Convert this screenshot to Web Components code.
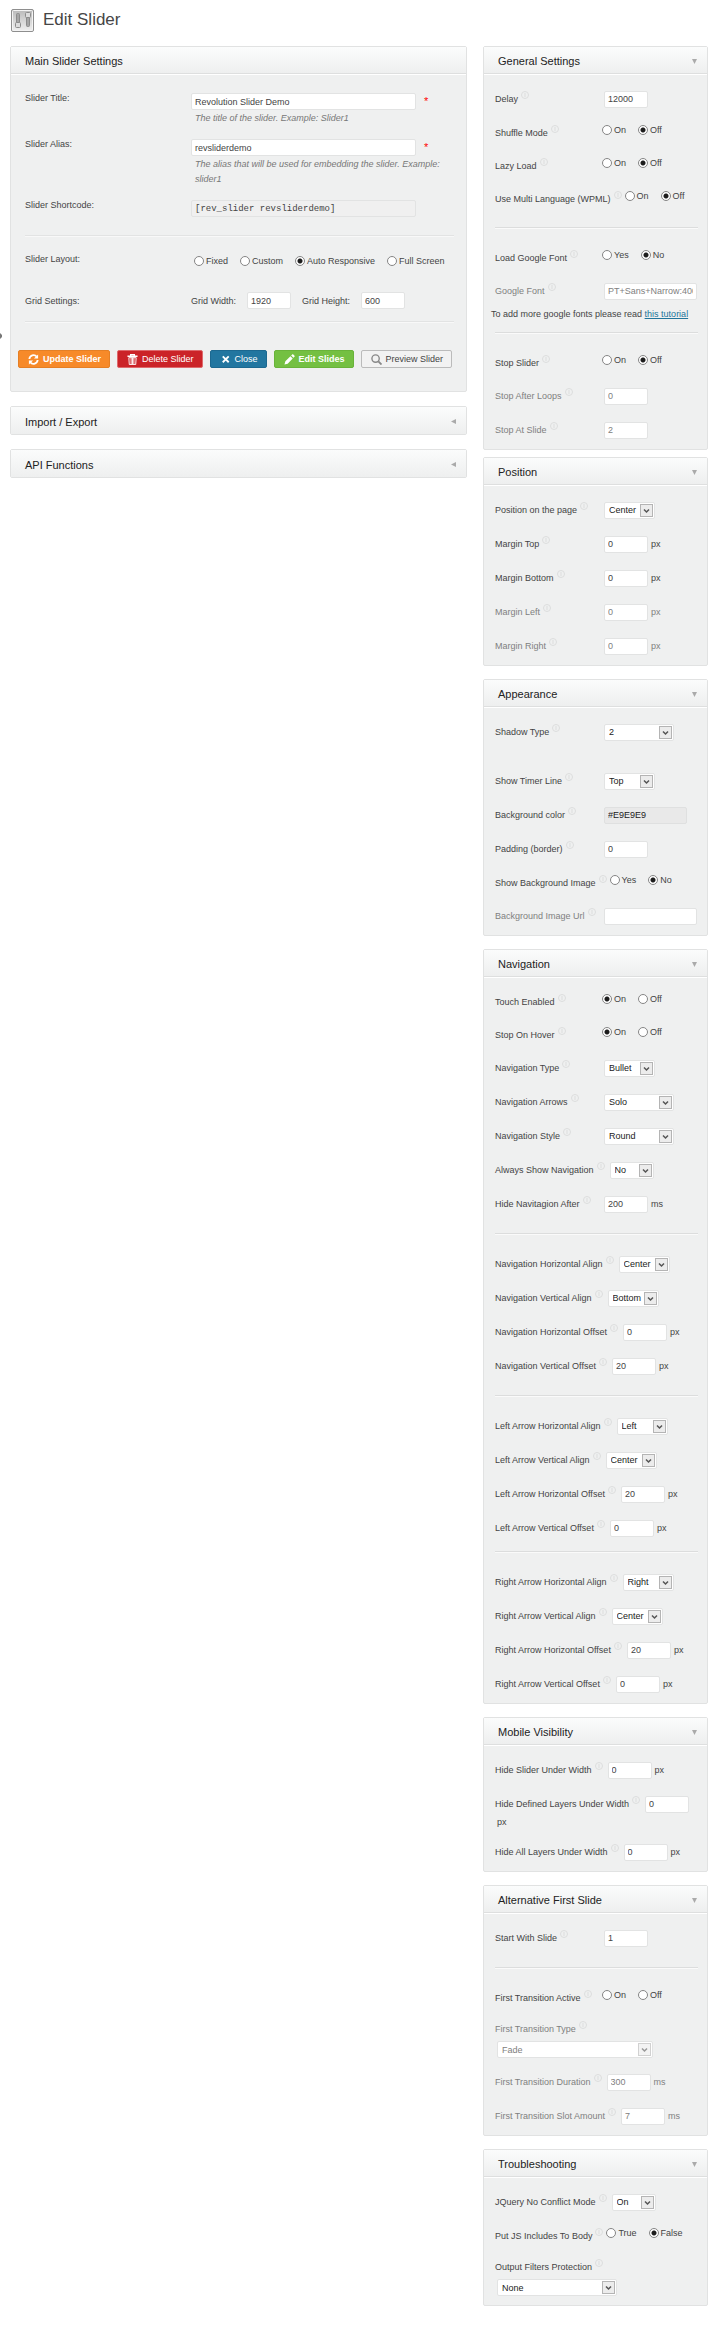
<!DOCTYPE html>
<html lang="en">
<head>
<meta charset="utf-8">
<title>Edit Slider</title>
<style>
  body {
    margin: 0;
    background: #fff;
    color: #444;
    font-family: "Liberation Sans", Arial, sans-serif;
    font-size: 9px;
    line-height: 14px;
  }
</style>
</head>
<body>
<slider-page>
  <settings-panel slot="main" heading="Main Slider Settings" fixed>
    <slider-form></slider-form>
  </settings-panel>
  <settings-panel slot="main" heading="Import / Export" closed></settings-panel>
  <settings-panel slot="main" heading="API Functions" closed></settings-panel>

  <panel-group slot="side">
    <settings-panel heading="General Settings">
      <setting-row label="Delay" value="12000"></setting-row>
      <setting-row label="Shuffle Mode" type="radio" options="On,Off" value="Off"></setting-row>
      <setting-row label="Lazy Load" type="radio" options="On,Off" value="Off"></setting-row>
      <setting-row label="Use Multi Language (WPML)" type="radio" options="On,Off" value="Off"></setting-row>
      <setting-divider></setting-divider>
      <setting-row label="Load Google Font" type="radio" options="Yes,No" value="No"></setting-row>
      <setting-row label="Google Font" value="PT+Sans+Narrow:400,700" size="wide" muted></setting-row>
      <setting-note>To add more google fonts please read <a href="#tutorial">this tutorial</a></setting-note>
      <setting-divider></setting-divider>
      <setting-row label="Stop Slider" type="radio" options="On,Off" value="Off"></setting-row>
      <setting-row label="Stop After Loops" value="0" muted></setting-row>
      <setting-row label="Stop At Slide" value="2" muted></setting-row>
    </settings-panel>
    <settings-panel heading="Position">
      <setting-row label="Position on the page" type="select" value="Center"></setting-row>
      <setting-row label="Margin Top" value="0" unit="px"></setting-row>
      <setting-row label="Margin Bottom" value="0" unit="px"></setting-row>
      <setting-row label="Margin Left" value="0" unit="px" muted></setting-row>
      <setting-row label="Margin Right" value="0" unit="px" muted></setting-row>
    </settings-panel>
  </panel-group>

  <settings-panel slot="side" heading="Appearance">
    <setting-row label="Shadow Type" type="select" value="2" size="medium"></setting-row>
    <setting-divider blank></setting-divider>
    <setting-row label="Show Timer Line" type="select" value="Top"></setting-row>
    <setting-row label="Background color" value="#E9E9E9" size="color"></setting-row>
    <setting-row label="Padding (border)" value="0"></setting-row>
    <setting-row label="Show Background Image" type="radio" options="Yes,No" value="No"></setting-row>
    <setting-row label="Background Image Url" value="" size="wide" muted></setting-row>
  </settings-panel>

  <settings-panel slot="side" heading="Navigation">
    <setting-row label="Touch Enabled" type="radio" options="On,Off" value="On"></setting-row>
    <setting-row label="Stop On Hover" type="radio" options="On,Off" value="On"></setting-row>
    <setting-row label="Navigation Type" type="select" value="Bullet"></setting-row>
    <setting-row label="Navigation Arrows" type="select" value="Solo" size="medium"></setting-row>
    <setting-row label="Navigation Style" type="select" value="Round" size="medium"></setting-row>
    <setting-row label="Always Show Navigation" type="select" value="No" size="small"></setting-row>
    <setting-row label="Hide Navitagion After" value="200" unit="ms"></setting-row>
    <setting-divider></setting-divider>
    <setting-row label="Navigation Horizontal Align" type="select" value="Center"></setting-row>
    <setting-row label="Navigation Vertical Align" type="select" value="Bottom"></setting-row>
    <setting-row label="Navigation Horizontal Offset" value="0" unit="px"></setting-row>
    <setting-row label="Navigation Vertical Offset" value="20" unit="px"></setting-row>
    <setting-divider></setting-divider>
    <setting-row label="Left Arrow Horizontal Align" type="select" value="Left"></setting-row>
    <setting-row label="Left Arrow Vertical Align" type="select" value="Center"></setting-row>
    <setting-row label="Left Arrow Horizontal Offset" value="20" unit="px"></setting-row>
    <setting-row label="Left Arrow Vertical Offset" value="0" unit="px"></setting-row>
    <setting-divider compact></setting-divider>
    <setting-row label="Right Arrow Horizontal Align" type="select" value="Right"></setting-row>
    <setting-row label="Right Arrow Vertical Align" type="select" value="Center"></setting-row>
    <setting-row label="Right Arrow Horizontal Offset" value="20" unit="px"></setting-row>
    <setting-row label="Right Arrow Vertical Offset" value="0" unit="px"></setting-row>
  </settings-panel>

  <settings-panel slot="side" heading="Mobile Visibility">
    <setting-row label="Hide Slider Under Width" value="0" unit="px"></setting-row>
    <setting-row label="Hide Defined Layers Under Width" value="0" unit="px" unit-below></setting-row>
    <setting-row label="Hide All Layers Under Width" value="0" unit="px"></setting-row>
  </settings-panel>

  <settings-panel slot="side" heading="Alternative First Slide">
    <setting-row label="Start With Slide" value="1"></setting-row>
    <setting-divider></setting-divider>
    <setting-row label="First Transition Active" type="radio" options="On,Off" value=""></setting-row>
    <setting-row label="First Transition Type" type="select" value="Fade" size="full" stacked muted></setting-row>
    <setting-row label="First Transition Duration" value="300" unit="ms" muted></setting-row>
    <setting-row label="First Transition Slot Amount" value="7" unit="ms" muted></setting-row>
  </settings-panel>

  <settings-panel slot="side" heading="Troubleshooting">
    <setting-row label="JQuery No Conflict Mode" type="select" value="On" size="small"></setting-row>
    <setting-row label="Put JS Includes To Body" type="radio" options="True,False" value="False"></setting-row>
    <setting-row label="Output Filters Protection" type="select" value="None" size="large" stacked></setting-row>
  </settings-panel>
</slider-page>

<script>
// Form control look, shared by every element that draws a field
const controlStyles = /* css */ `
  * {
    box-sizing: border-box;
  }

  input,
  select,
  button {
    font: inherit;
    color: inherit;
    margin: 0;
  }

  input[type="text"],
  select {
    height: 17px;
    padding: 0 3px;
    border: 1px solid #e2e3e3;
    border-radius: 2px;
    background: #fff;
    outline: none;
  }

  input[type="radio"] {
    appearance: none;
    flex: none;
    width: 10px;
    height: 10px;
    border: 1px solid #858585;
    border-radius: 50%;
    background: #fff;
  }

  input[type="radio"]:checked {
    background: radial-gradient(circle, #1c1c1c 0 2px, #fff 3px);
  }

  .radios {
    display: flex;
    align-items: center;
    gap: 12px;
  }

  .radios label {
    display: flex;
    align-items: center;
    gap: 2px;
    white-space: nowrap;
  }
`

class SliderPage extends HTMLElement {
  constructor() {
    super()
    this.attachShadow({ mode: "open" }).innerHTML = /* html */ `
      <style>
        :host {
          display: block;
          position: relative;
          padding: 0 15px 24px 10px;
        }

        header {
          display: flex;
          align-items: center;
          gap: 8px;
          height: 46px;
          padding-bottom: 6px;
          box-sizing: border-box;
        }

        header svg {
          width: 25px;
          height: 25px;
        }

        h1 {
          margin: 0;
          color: #464646;
          font-size: 17px;
          font-weight: 400;
          line-height: 24px;
        }

        .columns {
          display: grid;
          grid-template-columns: 1fr 225px;
          gap: 16px;
          align-items: start;
        }

        .main,
        aside {
          display: flex;
          flex-direction: column;
          gap: 14px;
        }

        aside {
          gap: 13px;
        }

        /* handle of the collapsed admin menu, sits on the window edge */
        .handle {
          position: absolute;
          left: 0;
          top: 333px;
          width: 2px;
          height: 6px;
        }
      </style>
      <svg class="handle" viewBox="0 0 2 6"><path d="M0 0L2 2V4L0 6Z" fill="#777"/></svg>
      <header>
        <svg viewBox="0 0 25 25" aria-hidden="true">
          <defs>
            <linearGradient id="tile" x1="0" y1="0" x2="0" y2="1">
              <stop offset="0" stop-color="#b9b9b9"/>
              <stop offset="1" stop-color="#f1f1f1"/>
            </linearGradient>
          </defs>
          <rect x="1.5" y="1.5" width="22" height="22" rx="1.5" fill="url(#tile)" stroke="#8e8e8e"/>
          <rect x="2.5" y="2.5" width="20" height="20" rx="1" fill="none" stroke="#f4f4f4"/>
          <rect x="6.5" y="5.5" width="3" height="11" rx="1" fill="#a6a6a6" stroke="#8c8c8c"/>
          <rect x="5.5" y="14.5" width="5" height="5" rx="1" fill="#dcdcdc" stroke="#8c8c8c"/>
          <rect x="16.5" y="8.5" width="3" height="10" rx="1" fill="#a6a6a6" stroke="#8c8c8c"/>
          <rect x="15.5" y="4.5" width="5" height="5" rx="1" fill="#dcdcdc" stroke="#8c8c8c"/>
        </svg>
        <h1>Edit Slider</h1>
      </header>
      <div class="columns">
        <div class="main"><slot name="main"></slot></div>
        <aside><slot name="side"></slot></aside>
      </div>
    `
  }
}

class PanelGroup extends HTMLElement {
  constructor() {
    super()
    this.attachShadow({ mode: "open" }).innerHTML = /* html */ `
      <style>
        :host {
          display: flex;
          flex-direction: column;
          gap: 7px;
        }
      </style>
      <slot></slot>
    `
  }
}

class SettingsPanel extends HTMLElement {
  connectedCallback() {
    const fixed = this.hasAttribute("fixed")
    const root = this.attachShadow({ mode: "open" })
    root.innerHTML = /* html */ `
      <style>
        :host {
          display: block;
          border: 1px solid #e1e2e2;
          border-radius: 2px;
          background: #eff0f0;
        }

        header {
          display: flex;
          align-items: center;
          justify-content: space-between;
          height: 27px;
          padding: 2px 10px 0 14px;
          box-sizing: border-box;
          border-bottom: 1px solid #dedfdf;
          background: linear-gradient(#fbfcfc, #eeefef);
        }

        h2 {
          margin: 0;
          color: #222;
          font-size: 11px;
          font-weight: 400;
          line-height: 16px;
        }

        button {
          display: flex;
          padding: 0;
          border: 0;
          background: none;
          cursor: pointer;
        }

        svg {
          width: 5px;
          height: 5px;
          fill: #aaa;
        }

        .body {
          padding: 7px 9px 2px 11px;
          border-top: 1px solid #fff;
        }

        :host([fixed]) .body {
          padding: 16px 12px 23px 7px;
        }

        :host([closed]) header {
          border-bottom: 0;
        }

        :host([closed]) .body {
          display: none;
        }

        :host([closed]) svg {
          transform: rotate(90deg);
        }
      </style>
      <header>
        <h2>${this.getAttribute("heading")}</h2>
        ${fixed ? "" : `<button type="button" aria-label="Toggle ${this.getAttribute("heading")}">
          <svg viewBox="0 0 6 6"><path d="M0 0H6L3 6Z"/></svg>
        </button>`}
      </header>
      <div class="body"><slot></slot></div>
    `
    if (!fixed) {
      root.querySelector("button").addEventListener("click", () => {
        this.toggleAttribute("closed")
      })
    }
  }
}

class SettingDivider extends HTMLElement {
  constructor() {
    super()
    this.attachShadow({ mode: "open" }).innerHTML = /* html */ `
      <style>
        :host {
          display: block;
          padding: 12px 0;
        }

        :host([compact]) {
          padding-top: 6px;
        }

        :host([blank]) {
          height: 15px;
          padding: 0;
        }

        :host([blank]) hr {
          display: none;
        }

        hr {
          margin: 0;
          border: 0;
          border-top: 1px solid #dcdddd;
          border-bottom: 1px solid #fafafa;
        }
      </style>
      <hr>
    `
  }
}

class SettingNote extends HTMLElement {
  constructor() {
    super()
    this.attachShadow({ mode: "open" }).innerHTML = /* html */ `
      <style>
        :host {
          display: block;
          margin: 0 -4px;
          line-height: 12px;
        }

        ::slotted(a) {
          color: #21759b;
        }
      </style>
      <slot></slot>
    `
  }
}

class SettingRow extends HTMLElement {
  connectedCallback() {
    this.type = this.getAttribute("type") || "text"
    this.value = this.getAttribute("value")
    this.attachShadow({ mode: "open" }).innerHTML = this.template()
  }

  control() {
    if (this.type === "radio") {
      const options = this.getAttribute("options").split(",")
      return `<div class="radios" role="radiogroup" aria-labelledby="name">
        ${options.map((o) => `<label><input type="radio" name="choice" ${o === this.value ? "checked" : ""}>${o}</label>`).join("")}
      </div>`
    }
    if (this.type === "select") {
      return `<span class="select">
        <select id="field"><option>${this.value}</option></select>
        <svg viewBox="0 0 13 13"><rect x="0.5" y="0.5" width="12" height="12"/><path d="M4 5.5L6.5 8L9 5.5"/></svg>
      </span>`
    }
    return `<input type="text" id="field" value="${this.value}">`
  }

  template() {
    const unit = this.getAttribute("unit")
    const tag = this.type === "radio" ? "span" : "label"
    return /* html */ `
      <style>
        ${controlStyles}

        :host {
          display: flex;
          flex-wrap: wrap;
          align-items: center;
        }

        .name {
          display: flex;
          align-items: center;
          gap: 3px;
          min-width: 107px;
          height: 34px;
          padding-right: 3px;
          white-space: nowrap;
        }

        .info {
          width: 8px;
          height: 8px;
          margin-bottom: 8px;
          fill: none;
          stroke: #dcdddd;
        }

        #field {
          width: 44px;
        }

        input[type="text"],
        .select {
          margin-left: 2px;
        }

        .select {
          position: relative;
          display: flex;
        }

        .select #field {
          appearance: none;
          width: 51px;
          padding: 0 0 0 4px;
          color: #222;
        }

        .select svg {
          position: absolute;
          right: 2px;
          top: 2px;
          width: 13px;
          height: 13px;
          fill: #ececec;
          stroke: #b4b4b4;
          pointer-events: none;
        }

        .select path {
          fill: none;
          stroke: #555;
          stroke-width: 1.5;
        }

        .unit {
          margin-left: 3px;
        }

        /* unit has no room beside the field and hangs under the label */
        :host([unit-below]) .unit {
          margin: -6px 0 6px 2px;
        }

        :host([type="radio"]) .name {
          height: 33px;
        }

        .radios {
          margin-bottom: 5px;
        }

        :host([size="small"]) #field { width: 44px; }
        :host([size="medium"]) #field { width: 70px; }
        :host([size="wide"]) #field { width: 93px; }
        :host([size="large"]) #field { width: 120px; }
        :host([size="full"]) #field { width: 156px; }

        :host([size="color"]) #field {
          width: 83px;
          background: #e9e9e9;
          border-color: #dfe0e0;
          color: #222;
        }

        :host([stacked]) {
          flex-direction: column;
          align-items: flex-start;
          padding: 3px 0 7px;
        }

        :host([stacked]) .name {
          height: 24px;
        }

        :host([muted]),
        :host([muted]) .select #field {
          color: #808080;
        }

        :host([muted]) .select svg {
          opacity: 0.6;
        }
      </style>
      <${tag} class="name" id="name" ${tag === "label" ? 'for="field"' : ""}>
        ${this.getAttribute("label")}
        <svg class="info" viewBox="0 0 8 8"><circle cx="4" cy="4" r="3.5"/><path d="M4 2V6"/></svg>
      </${tag}>
      ${this.control()}
      ${unit ? `<span class="unit">${unit}</span>` : ""}
    `
  }
}

class SliderForm extends HTMLElement {
  constructor() {
    super()
    this.attachShadow({ mode: "open" }).innerHTML = /* html */ `
      <style>
        ${controlStyles}

        :host {
          display: block;
        }

        .rows {
          display: grid;
          row-gap: 11px;
          padding-left: 7px;
        }

        .row {
          display: grid;
          grid-template-columns: 166px 1fr;
          align-items: start;
        }

        .field {
          padding-top: 2px;
        }

        .line {
          display: flex;
          align-items: center;
          gap: 8px;
        }

        .line input {
          width: 225px;
        }

        .required {
          color: #f00;
          font-size: 11px;
          line-height: 11px;
        }

        .line .code {
          background: #f0f0f0;
          font-family: "Liberation Mono", monospace;
        }

        p {
          margin: 1px 0 0;
          padding-left: 4px;
          color: #777;
          font-style: italic;
          line-height: 15px;
        }

        .layout {
          row-gap: 24px;
          padding-top: 15px;
        }

        .layout .radios {
          padding-left: 3px;
        }

        .grid {
          align-items: center;
        }

        .grid .line {
          gap: 11px;
        }

        .grid input {
          width: 44px;
        }

        hr {
          margin: 18px 0 0 7px;
          border: 0;
          border-top: 1px solid #e2e3e3;
          border-bottom: 1px solid #f8f8f8;
        }

        .layout + hr {
          margin-top: 12px;
        }

        .buttons {
          display: flex;
          flex-wrap: wrap;
          gap: 7px;
          margin: 27px -12px 0 0;
        }

        button {
          display: flex;
          align-items: center;
          gap: 4px;
          height: 18px;
          padding: 0 8px 0 9px;
          border: 1px solid;
          border-radius: 2px;
          color: #fff;
          white-space: nowrap;
          cursor: pointer;
        }

        button svg {
          width: 11px;
          height: 11px;
          fill: none;
          stroke: currentColor;
          stroke-width: 2;
        }

        .update { background: #f78a29; border-color: #e57f24; font-weight: 700; }
        .delete { background: #cb2328; border-color: #de6a6d; }
        .close { background: #2276a0; border-color: #1c6890; }
        .edit { background: #74c042; border-color: #69b33a; font-weight: 700; }
        .preview { background: #f2f2f2; border-color: #bbb; color: #444; }
        .preview svg { stroke: #888; }
      </style>
      <form>
        <div class="rows">
          <div class="row">
            <label for="title">Slider Title:</label>
            <div class="field">
              <div class="line"><input type="text" id="title" value="Revolution Slider Demo"><span class="required">*</span></div>
              <p>The title of the slider. Example: Slider1</p>
            </div>
          </div>
          <div class="row">
            <label for="alias">Slider Alias:</label>
            <div class="field">
              <div class="line"><input type="text" id="alias" value="revsliderdemo"><span class="required">*</span></div>
              <p>The alias that will be used for embedding the slider. Example: slider1</p>
            </div>
          </div>
          <div class="row">
            <label for="shortcode">Slider Shortcode:</label>
            <div class="field line"><input type="text" id="shortcode" class="code" value="[rev_slider revsliderdemo]" readonly></div>
          </div>
        </div>
        <hr>
        <div class="rows layout">
          <div class="row">
            <span id="layout">Slider Layout:</span>
            <div class="field radios" role="radiogroup" aria-labelledby="layout">
              <label><input type="radio" name="layout">Fixed</label>
              <label><input type="radio" name="layout">Custom</label>
              <label><input type="radio" name="layout" checked>Auto Responsive</label>
              <label><input type="radio" name="layout">Full Screen</label>
            </div>
          </div>
          <div class="row grid">
            <span>Grid Settings:</span>
            <div class="line">
              <label for="width">Grid Width:</label>
              <input type="text" id="width" value="1920">
              <label for="height">Grid Height:</label>
              <input type="text" id="height" value="600">
            </div>
          </div>
        </div>
        <hr>
        <div class="buttons">
          <button type="button" class="update">
            <svg viewBox="0 0 12 12"><path d="M1.5 5.5A4.5 4.5 0 0 1 9.5 3M10.5 6.5A4.5 4.5 0 0 1 2.5 9"/><path d="M11 0.5V5H6.5ZM1 11.5V7H5.5Z" fill="currentColor" stroke="none"/></svg>Update Slider
          </button>
          <button type="button" class="delete">
            <svg viewBox="0 0 12 12" style="stroke-width:1"><path d="M0.5 2.5H11.5M4 2V0.5H8V2" stroke-width="1.5"/><path d="M2 4H10L9.5 11.5H2.5ZM4.5 4V11M6 4V11M7.5 4V11"/></svg>Delete Slider
          </button>
          <button type="button" class="close">
            <svg viewBox="0 0 12 12"><path d="M3 2.5L9.5 9M9.5 2.5L3 9"/></svg>Close
          </button>
          <button type="button" class="edit">
            <svg viewBox="0 0 12 12"><path d="M0.5 11.5L1.5 8L7 2.5L9.5 5L4 10.5ZM7.8 1.7L9.2 0.3Q9.7 0 10.2 0.5L11.5 1.8Q12 2.3 11.6 2.8L10.3 4.2Z" fill="currentColor" stroke="none"/></svg>Edit Slides
          </button>
          <button type="button" class="preview">
            <svg viewBox="0 0 12 12"><circle cx="5" cy="5" r="4" stroke-width="1.5"/><path d="M8 8L11.5 11.5"/></svg>Preview Slider
          </button>
        </div>
      </form>
    `
  }
}

customElements.define("slider-page", SliderPage)
customElements.define("panel-group", PanelGroup)
customElements.define("settings-panel", SettingsPanel)
customElements.define("setting-divider", SettingDivider)
customElements.define("setting-note", SettingNote)
customElements.define("setting-row", SettingRow)
customElements.define("slider-form", SliderForm)
</script>
</body>
</html>
